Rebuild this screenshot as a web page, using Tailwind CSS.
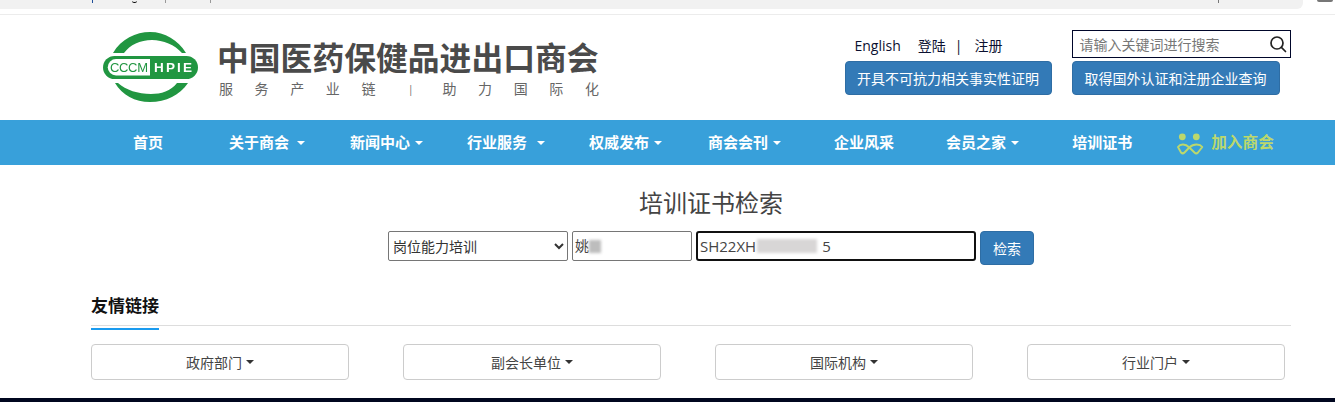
<!DOCTYPE html>
<html lang="zh">
<head>
<meta charset="utf-8">
<title>培训证书检索</title>
<script src="https://cdn.jsdelivr.net/npm/@tailwindcss/browser@4"></script>
</head>
<body class="h-[402px] overflow-hidden bg-white font-['Open_Sans','Noto_Sans_CJK_SC',sans-serif] text-[14px] text-[#333]">
  <!-- browser remnant -->
  <div class="relative h-[15px] border-b border-[#ececec]">
    <div class="h-[9px] w-[1303px] rounded-br-[6px] bg-[#f1f1f1]"></div>
    <div class="absolute left-[92px] top-0 h-[3px] w-[1px] bg-[#1f4f9a]"></div>
    <div class="absolute left-[132px] top-0 h-[3px] w-[5px] rounded-b-full border-b border-black"></div>
    <div class="absolute left-[165px] top-0 h-[3px] w-[1px] bg-[#999]"></div>
    <div class="absolute left-[210px] top-0 h-[3px] w-[1px] bg-[#999]"></div>
    <div class="absolute left-[1218px] top-0 h-[3px] w-[1px] bg-[#777]"></div>
    <div class="absolute left-[1317px] top-0 h-[2px] w-[16px] rounded-b-[3px] bg-[#777]"></div>
  </div>

  <!-- header -->
  <header class="flex h-[105px]">
    <div class="ml-[101px] mt-[17px] flex">
      <svg width="98" height="72" viewBox="0 0 98 72" class="blur-[0.4px]">
        <path d="M12 21 C20 7 35 0 49 0 C64 0 77 8 85 21 H81 C74 13 62 8 51 8 C39 8 29 13 23 21 Z" fill="#219641"/>
        <path d="M87 51 C79 63 65 70 49 70 C34 70 21 63 14 51 H17 C25 58 37 62 50 62 C60 62 70 59 76 51 Z" fill="#219641"/>
        <rect x="2" y="24" width="95" height="23" rx="11.5" fill="#219641"/>
        <path d="M15 27 H49 V43.5 H15 A8.2 8.2 0 0 1 15 27 Z" fill="#fff"/>
        <text x="9" y="40.3" font-family="Liberation Sans" font-size="13" fill="#219641" textLength="38">CCCM</text>
        <text x="53" y="40.3" font-family="Liberation Sans" font-weight="bold" font-size="13.5" fill="#fff" textLength="38" lengthAdjust="spacing">HPIE</text>
      </svg>
      <div class="ml-[20px] mt-[5px]">
        <div class="-ml-[2px] text-[31.8px] leading-[38px] font-bold whitespace-nowrap text-[#4a4a4a] font-['Noto_Sans_CJK_SC',sans-serif]">中国医药保健品进出口商会</div>
        <div class="mt-[4px] flex whitespace-nowrap text-[14px] leading-[20px] text-[#666]">
          <span class="tracking-[21.6px]">服务产业链</span><span class="ml-[11px] text-[10px]">|</span><span class="ml-[29px] tracking-[21.6px]">助力国际化</span>
        </div>
      </div>
    </div>

    <div class="ml-[224px] w-[207px]">
      <div class="mt-[21px] ml-[10px] flex h-[20px] items-center whitespace-nowrap leading-[20px] text-[#0b1030]">
        <span>English</span>
        <span class="ml-[17px]">登陆</span>
        <span class="ml-[9px]">|</span>
        <span class="ml-[12px]">注册</span>
      </div>
      <button class="mt-[5px] h-[34px] w-[207px] rounded-[4px] border border-[#2e6da4] bg-[#337ab7] text-[14px] whitespace-nowrap text-white">开具不可抗力相关事实性证明</button>
    </div>

    <div class="ml-[20px] w-[219px]">
      <div class="mt-[15px] flex h-[28px] w-[219px] items-center justify-between border border-[#00062a] pl-[7px] pr-[3px]">
        <span class="text-[14px] text-[#777]">请输入关键词进行搜索</span>
        <svg width="18" height="18" viewBox="0 0 18 18" fill="none" stroke="#222" stroke-width="1.7"><circle cx="8" cy="8" r="6"/><path d="M12.4 12.4 L16.5 16.5" stroke-linecap="round"/></svg>
      </div>
      <button class="mt-[3px] h-[34px] w-[208px] rounded-[4px] border border-[#2e6da4] bg-[#337ab7] text-[14px] whitespace-nowrap text-white">取得国外认证和注册企业查询</button>
    </div>
  </header>

  <!-- nav -->
  <nav class="flex h-[45px] items-center bg-[#38a0da] pl-[133px] text-[15px] font-bold whitespace-nowrap text-white">
    <span>首页</span>
    <span class="ml-[66px] flex items-center">关于商会<i class="ml-[8px] border-x-[4px] border-t-[4px] border-x-transparent border-t-white"></i></span>
    <span class="ml-[45px] flex items-center">新闻中心<i class="ml-[5px] border-x-[4px] border-t-[4px] border-x-transparent border-t-white"></i></span>
    <span class="ml-[44px] flex items-center">行业服务<i class="ml-[10px] border-x-[4px] border-t-[4px] border-x-transparent border-t-white"></i></span>
    <span class="ml-[44px] flex items-center">权威发布<i class="ml-[5px] border-x-[4px] border-t-[4px] border-x-transparent border-t-white"></i></span>
    <span class="ml-[46px] flex items-center">商会会刊<i class="ml-[5px] border-x-[4px] border-t-[4px] border-x-transparent border-t-white"></i></span>
    <span class="ml-[53px]">企业风采</span>
    <span class="ml-[52px] flex items-center">会员之家<i class="ml-[5px] border-x-[4px] border-t-[4px] border-x-transparent border-t-white"></i></span>
    <span class="ml-[53px]">培训证书</span>
    <span class="ml-[44px] flex items-center text-[#bcd86c]">
      <svg width="28" height="24" viewBox="0 0 28 24" fill="none" stroke="#bcd86c" stroke-width="1.9" stroke-linecap="round" stroke-linejoin="round" class="overflow-visible">
        <circle cx="6.3" cy="5.8" r="3.4" fill="#bcd86c" stroke="none"/><circle cx="20.3" cy="5.8" r="3.4" fill="#bcd86c" stroke="none"/>
        <path d="M2 16 C4 13 9 12 13.3 16.5 L18.5 21.5 C19.5 22.5 21 22.5 22 21.5 L26.3 16 C24 13 18 12 13.3 16.5 L8.5 21.5 C7.5 22.5 6 22.5 5 21.5 Z"/>
      </svg>
      <span class="ml-[7px] text-[15.7px]">加入商会</span>
    </span>
  </nav>

  <!-- search -->
  <main>
    <h1 class="mt-[21px] text-center text-[24px] leading-[34px] font-normal text-[#444] pl-[87px]">培训证书检索</h1>
    <form class="mt-[11px] flex items-start pl-[388px]">
      <select class="h-[30px] w-[180px] rounded-[2px] border border-[#767676] bg-white text-[14px] text-[#333]">
        <option>岗位能力培训</option>
      </select>
      <div class="relative ml-[4px] h-[30px] w-[120px] rounded-[2px] border border-[#767676] pl-[2px] text-[14px] leading-[28px] text-[#444]">
        姚
        <span class="absolute left-[16px] top-[8px] h-[13px] w-[12px] bg-[#bdbdbd] blur-[1.5px]"></span>
      </div>
      <div class="relative ml-[4px] h-[30px] w-[280px] rounded-[3px] border-2 border-[#111] pl-[2px] text-[15px] leading-[26px] text-[#444]">
        SH22XH<span class="inline-block w-[66px]"></span>5
        <span class="absolute left-[59px] top-[6px] h-[14px] w-[60px] bg-[#d8d6d6] blur-[1.5px]"></span>
      </div>
      <button type="button" class="ml-[4px] h-[34px] w-[54px] rounded-[4px] border border-[#2e6da4] bg-[#337ab7] text-[14px] text-white">检索</button>
    </form>

    <!-- links -->
    <section class="mx-[91px] mt-[29px] w-[1200px]">
      <div class="h-[32px] border-b border-[#ddd]">
        <h2 class="h-[36px] w-[68px] border-b-2 border-[#1a9bef] text-[17px] leading-[23px] font-bold text-[#111]">友情链接</h2>
      </div>
      <div class="mt-[18px] flex gap-[54px]">
        <button class="flex h-[36px] w-[258px] items-center justify-center rounded-[4px] border border-[#ccc] text-[#444]">政府部门<i class="ml-[4px] border-x-[4px] border-t-[4px] border-x-transparent border-t-[#333]"></i></button>
        <button class="flex h-[36px] w-[258px] items-center justify-center rounded-[4px] border border-[#ccc] text-[#444]">副会长单位<i class="ml-[4px] border-x-[4px] border-t-[4px] border-x-transparent border-t-[#333]"></i></button>
        <button class="flex h-[36px] w-[258px] items-center justify-center rounded-[4px] border border-[#ccc] text-[#444]">国际机构<i class="ml-[4px] border-x-[4px] border-t-[4px] border-x-transparent border-t-[#333]"></i></button>
        <button class="flex h-[36px] w-[258px] items-center justify-center rounded-[4px] border border-[#ccc] text-[#444]">行业门户<i class="ml-[4px] border-x-[4px] border-t-[4px] border-x-transparent border-t-[#333]"></i></button>
      </div>
    </section>
  </main>
  <footer class="mt-[18px] h-[10px] bg-[#00061f]"></footer>
</body>
</html>
